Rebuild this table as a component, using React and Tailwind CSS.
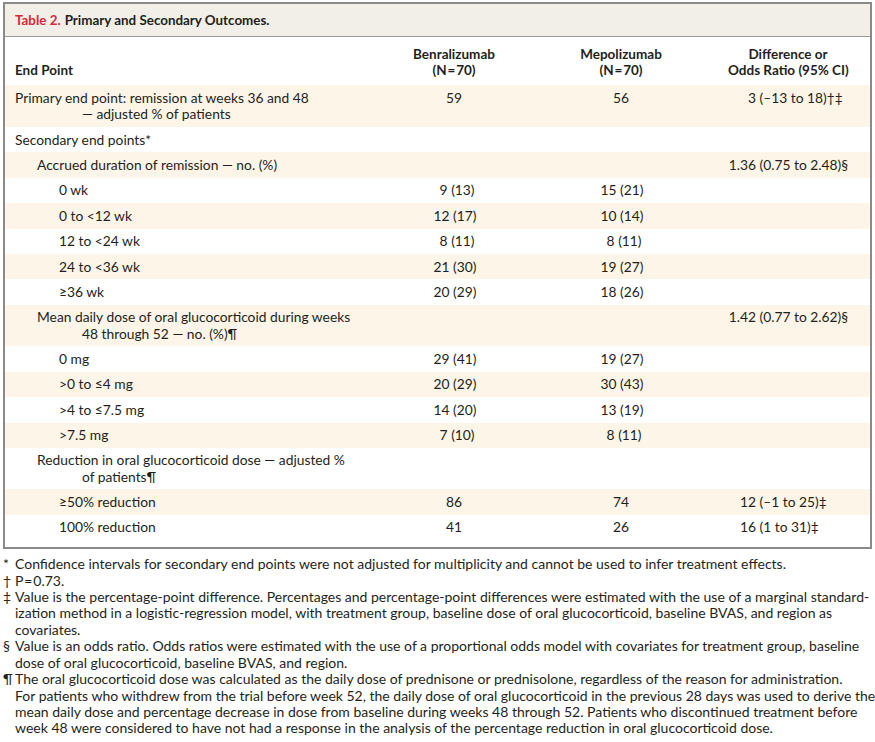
import React from "react";

const rows = [
  { l: ["Primary end point: remission at weeks 36 and 48", "— adjusted % of patients"], lv: 0, b: "59", m: "56", d: ["3", "(–13 to 18)†‡"] },
  { l: ["Secondary end points*"], lv: 0 },
  { l: ["Accrued duration of remission — no. (%)"], lv: 1, d: ["1.36", "(0.75 to 2.48)§"] },
  { l: ["0 wk"], lv: 2, b: "9 (13)", m: "15 (21)", p: true },
  { l: ["0 to <12 wk"], lv: 2, b: "12 (17)", m: "10 (14)", p: true },
  { l: ["12 to <24 wk"], lv: 2, b: "8 (11)", m: "8 (11)", p: true },
  { l: ["24 to <36 wk"], lv: 2, b: "21 (30)", m: "19 (27)", p: true },
  { l: ["≥36 wk"], lv: 2, b: "20 (29)", m: "18 (26)", p: true },
  { l: ["Mean daily dose of oral glucocorticoid during weeks", "48 through 52 — no. (%)¶"], lv: 1, d: ["1.42", "(0.77 to 2.62)§"] },
  { l: ["0 mg"], lv: 2, b: "29 (41)", m: "19 (27)", p: true },
  { l: [">0 to ≤4 mg"], lv: 2, b: "20 (29)", m: "30 (43)", p: true },
  { l: [">4 to ≤7.5 mg"], lv: 2, b: "14 (20)", m: "13 (19)", p: true },
  { l: [">7.5 mg"], lv: 2, b: "7 (10)", m: "8 (11)", p: true },
  { l: ["Reduction in oral glucocorticoid dose — adjusted %", "of patients¶"], lv: 1 },
  { l: ["≥50% reduction"], lv: 2, b: "86", m: "74", d: ["12", "(–1 to 25)‡"] },
  { l: ["100% reduction"], lv: 2, b: "41", m: "26", d: ["16", "(1 to 31)‡"] },
];

const indent = ["pl-[10px]", "pl-[32px]", "pl-[54px]"];

function Num({ v, p }) {
  if (!v) return null;
  if (p) return <span className="inline-block w-[41px] text-right whitespace-nowrap">{v}</span>;
  return <span>{v}</span>;
}

function Row({ r, i }) {
  return (
    <div className={`flex py-[4.6px] ${i % 2 === 0 ? "bg-[#fdf5e8]" : "bg-white"}`}>
      <div className="w-[389px] shrink-0">
        <div className={`${indent[r.lv]} whitespace-nowrap`}>{r.l[0]}</div>
        {r.l[1] && <div className="pl-[77px] whitespace-nowrap">{r.l[1]}</div>}
      </div>
      <div className="w-[120px] shrink-0 text-center">
        <Num v={r.b} p={r.p} />
      </div>
      <div className="w-[214px] shrink-0 text-center">
        <Num v={r.m} p={r.p} />
      </div>
      <div className="w-[120px] shrink-0 whitespace-nowrap">
        {r.d && (
          <>
            <span className="inline-block w-[28px] text-right">{r.d[0]}</span>
            <span> {r.d[1]}</span>
          </>
        )}
      </div>
    </div>
  );
}

const notes = [
  ["*", ["Confidence intervals for secondary end points were not adjusted for multiplicity and cannot be used to infer treatment effects."]],
  ["†", ["P\u200a=\u200a0.73."]],
  ["‡", [
    "Value is the percentage-point difference. Percentages and percentage-point differences were estimated with the use of a marginal standard-",
    "ization method in a logistic-regression model, with treatment group, baseline dose of oral glucocorticoid, baseline BVAS, and region as",
    "covariates.",
  ]],
  ["§", [
    "Value is an odds ratio. Odds ratios were estimated with the use of a proportional odds model with covariates for treatment group, baseline",
    "dose of oral glucocorticoid, baseline BVAS, and region.",
  ]],
  ["¶", [
    "The oral glucocorticoid dose was calculated as the daily dose of prednisone or prednisolone, regardless of the reason for administration.",
    "For patients who withdrew from the trial before week 52, the daily dose of oral glucocorticoid in the previous 28 days was used to derive the",
    "mean daily dose and percentage decrease in dose from baseline during weeks 48 through 52. Patients who discontinued treatment before",
    "week 48 were considered to have not had a response in the analysis of the percentage reduction in oral glucocorticoid dose.",
  ]],
];

export default function App() {
  return (
    <div
      className="w-[875px] h-[742px] bg-white pl-[3px] pt-[2px] text-[#231f20] text-[13.8px] leading-[16.2px] overflow-hidden"
      style={{ fontFamily: "Lato, 'Open Sans', sans-serif" }}
    >
      <div className="w-[869px] border-2 border-[#8a8a8a]">
        <div className="h-[33px] flex items-center pl-[10px] pt-[1px] bg-[#f2efe9] border-b border-[#9a9a9a] text-[13.4px] font-bold">
          <span className="text-[#d42b36]">Table 2.</span>
          <span className="ml-[4px]">Primary and Secondary Outcomes.</span>
        </div>
        <div className="flex pt-[9px] pb-[7px] font-bold text-[13.5px]">
          <div className="w-[389px] shrink-0 flex flex-col justify-end pl-[10px]">End Point</div>
          <div className="w-[120px] shrink-0 text-center">
            <div>Benralizumab</div>
            <div>(N{"\u200a"}={"\u200a"}70)</div>
          </div>
          <div className="w-[214px] shrink-0 text-center">
            <div>Mepolizumab</div>
            <div>(N{"\u200a"}={"\u200a"}70)</div>
          </div>
          <div className="w-[120px] shrink-0 text-center whitespace-nowrap">
            <div>Difference or</div>
            <div>Odds Ratio (95% CI)</div>
          </div>
        </div>
        {rows.map((r, i) => (
          <Row key={i} r={r} i={i} />
        ))}
        <div className="h-[7px]" />
      </div>
      <div className="mt-[7px] leading-[16.4px] text-[14px]">
        {notes.map(([s, lines], i) => (
          <div key={i} className="flex">
            <div className="w-[12px] shrink-0">{s}</div>
            <div>
              {lines.map((t, j) => (
                <div key={j} className="whitespace-nowrap">{t}</div>
              ))}
            </div>
          </div>
        ))}
      </div>
    </div>
  );
}
